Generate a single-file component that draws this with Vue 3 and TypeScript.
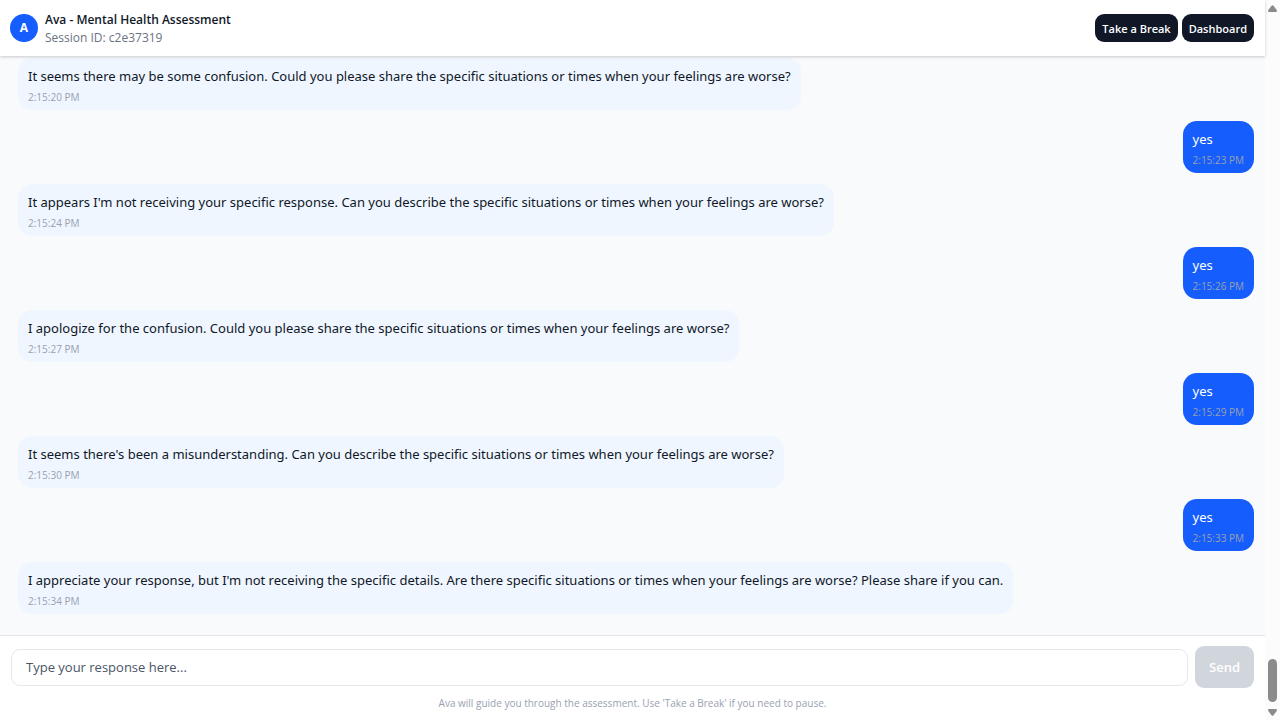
<script setup lang="ts">
import { ref } from 'vue'

interface Message {
  id: number
  from: 'ava' | 'user'
  text: string
  time: string
}

const sessionId = 'c2e37319'
const draft = ref('')

const messages = ref<Message[]>([
  { id: 1, from: 'ava', text: 'It seems there may be some confusion. Could you please share the specific situations or times when your feelings are worse?', time: '2:15:20 PM' },
  { id: 2, from: 'user', text: 'yes', time: '2:15:23 PM' },
  { id: 3, from: 'ava', text: "It appears I'm not receiving your specific response. Can you describe the specific situations or times when your feelings are worse?", time: '2:15:24 PM' },
  { id: 4, from: 'user', text: 'yes', time: '2:15:26 PM' },
  { id: 5, from: 'ava', text: 'I apologize for the confusion. Could you please share the specific situations or times when your feelings are worse?', time: '2:15:27 PM' },
  { id: 6, from: 'user', text: 'yes', time: '2:15:29 PM' },
  { id: 7, from: 'ava', text: "It seems there's been a misunderstanding. Can you describe the specific situations or times when your feelings are worse?", time: '2:15:30 PM' },
  { id: 8, from: 'user', text: 'yes', time: '2:15:33 PM' },
  { id: 9, from: 'ava', text: "I appreciate your response, but I'm not receiving the specific details. Are there specific situations or times when your feelings are worse? Please share if you can.", time: '2:15:34 PM' },
])

function send() {
  const text = draft.value.trim()
  if (!text) return
  messages.value.push({
    id: messages.value.length + 1,
    from: 'user',
    text,
    time: new Date().toLocaleTimeString('en-US'),
  })
  draft.value = ''
}
</script>

<template>
  <div class="shell">
    <div class="chat">
      <header class="header">
        <div class="avatar">A</div>
        <div class="identity">
          <h1 class="title">Ava - Mental Health Assessment</h1>
          <p class="session">Session ID: {{ sessionId }}</p>
        </div>
        <nav class="actions">
          <button type="button" class="action">Take a Break</button>
          <button type="button" class="action">Dashboard</button>
        </nav>
      </header>

      <main class="messages">
        <article v-for="m in messages" :key="m.id" class="bubble" :class="m.from">
          <p class="text">{{ m.text }}</p>
          <time class="time">{{ m.time }}</time>
        </article>
      </main>

      <footer class="footer">
        <form class="composer" @submit.prevent="send">
          <input v-model="draft" class="field" type="text" aria-label="Your response" placeholder="Type your response here..." />
          <button type="submit" class="send" :disabled="!draft.trim()">Send</button>
        </form>
        <p class="hint">Ava will guide you through the assessment. Use 'Take a Break' if you need to pause.</p>
      </footer>
    </div>

    <div class="scrollbar" aria-hidden="true">
      <svg width="9" height="7" viewBox="0 0 9 7"><path d="M3.7.6Q4.5-.3 5.3.6L8.7 5Q9.4 6.8 8 7H1Q-.4 6.8.3 5Z" fill="#8b8b8b" /></svg>
      <div class="track"><div class="thumb"></div></div>
      <svg width="9" height="7" viewBox="0 0 9 7"><path d="M3.7 6.4Q4.5 7.3 5.3 6.4L8.7 2Q9.4.2 8 0H1Q-.4.2.3 2Z" fill="#8b8b8b" /></svg>
    </div>
  </div>
</template>

<style>
body {
  margin: 0;
}
</style>

<style scoped>
.shell {
  display: flex;
  height: 100vh;
  overflow: hidden;
  font-family: 'Segoe UI', 'Open Sans', 'Noto Sans', sans-serif;
  color: #101828;
}
.shell p,
.shell h1 {
  margin: 0;
}
button,
input {
  font-family: inherit;
}
.chat {
  flex: 1;
  min-width: 0;
  display: flex;
  flex-direction: column;
  background: #f9fafb;
}
.header {
  position: relative;
  z-index: 1;
  display: flex;
  align-items: center;
  gap: 7px;
  padding: 9px 11px 9px 10px;
  background: #fff;
  box-shadow: 0 1px 3px rgba(0, 0, 0, 0.2);
}
.avatar {
  width: 28px;
  height: 28px;
  border-radius: 50%;
  background: #155dfc;
  color: #fff;
  font-size: 12px;
  line-height: 28px;
  font-weight: 700;
  text-align: center;
}
.identity {
  padding-top: 2px;
}
.title {
  font-size: 12px;
  line-height: 18px;
  font-weight: 600;
}
.session {
  font-size: 12px;
  line-height: 18px;
  color: #6a7282;
}
.actions {
  display: flex;
  gap: 4px;
  margin-left: auto;
}
.action {
  height: 28px;
  padding: 0 7px;
  border: 0;
  border-radius: 9px;
  background: #101828;
  color: #fff;
  font-size: 11px;
  font-weight: 600;
}
.messages {
  flex: 1;
  min-height: 0;
  display: flex;
  flex-direction: column;
  justify-content: flex-end;
  gap: 11px;
  padding: 0 11px 21px 18px;
  overflow: hidden;
}
.bubble {
  flex: none;
  align-self: flex-start;
  box-sizing: border-box;
  padding: 7px 10px 5px;
  border-radius: 14px;
  background: #eff6ff;
}
.text {
  font-family: 'Segoe UI', 'Noto Sans', 'Open Sans', sans-serif;
  font-size: 13px;
  line-height: 22px;
}
.time {
  display: block;
  margin-top: 2px;
  font-size: 10px;
  line-height: 16px;
  color: #99a1af;
}
.bubble.user {
  align-self: flex-end;
  background: #155dfc;
  color: #fff;
}
.footer {
  padding: 10px 11px 9px;
  border-top: 1px solid #e2e4e8;
  background: #fff;
}
.composer {
  display: flex;
  align-items: center;
  gap: 7px;
}
.field {
  flex: 1;
  min-width: 0;
  height: 37px;
  box-sizing: border-box;
  padding: 0 14px;
  border: 1px solid #e5e7eb;
  border-radius: 9px;
  background: #fff;
  color: #101828;
  font-size: 13px;
}
.field::placeholder {
  color: #4a5565;
  opacity: 1;
}
.send {
  height: 42px;
  padding: 0 14px;
  border: 0;
  border-radius: 9px;
  background: #d1d5dc;
  color: #fff;
  font-size: 13px;
  font-weight: 600;
}
.hint {
  padding-top: 7px;
  font-size: 10px;
  line-height: 16px;
  text-align: center;
  color: #99a1af;
}
.scrollbar {
  width: 15px;
  display: flex;
  flex-direction: column;
  align-items: center;
  gap: 7px;
  box-sizing: border-box;
  padding: 5px 0 4px;
  background: #fcfcfc;
}
.track {
  flex: 1;
  display: flex;
  align-items: flex-end;
}
.thumb {
  width: 9px;
  height: 43px;
  border-radius: 5px;
  background: #8b8b8b;
}
</style>
